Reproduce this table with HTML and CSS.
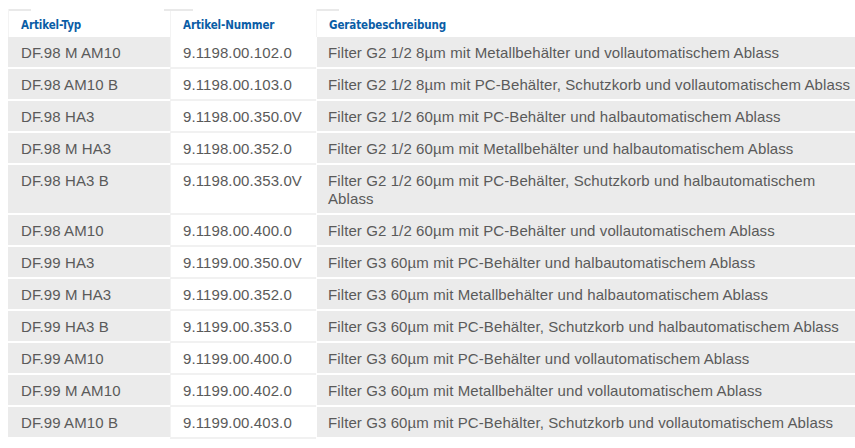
FILE: index.html
```html
<!DOCTYPE html>
<html lang="de">
<head>
<meta charset="utf-8">
<title>Filter</title>
<link rel="stylesheet" href="styles.css">
</head>
<body>
<table class="spec">
  <colgroup>
    <col class="c-typ">
    <col class="c-nr">
    <col class="c-desc">
  </colgroup>
  <thead>
    <tr>
      <th class="h-typ">Artikel-Typ</th>
      <th class="h-nr">Artikel-Nummer</th>
      <th class="h-desc">Gerätebeschreibung</th>
    </tr>
  </thead>
  <tbody>
    <tr><td>DF.98 M AM10</td><td class="nr">9.1198.00.102.0</td><td>Filter G2 1/2 8µm mit Metallbehälter und vollautomatischem Ablass</td></tr>
    <tr><td>DF.98 AM10 B</td><td class="nr">9.1198.00.103.0</td><td>Filter G2 1/2 8µm mit PC-Behälter, Schutzkorb und vollautomatischem Ablass</td></tr>
    <tr><td>DF.98 HA3</td><td class="nr">9.1198.00.350.0V</td><td>Filter G2 1/2 60µm mit PC-Behälter und halbautomatischem Ablass</td></tr>
    <tr><td>DF.98 M HA3</td><td class="nr">9.1198.00.352.0</td><td>Filter G2 1/2 60µm mit Metallbehälter und halbautomatischem Ablass</td></tr>
    <tr><td>DF.98 HA3 B</td><td class="nr">9.1198.00.353.0V</td><td>Filter G2 1/2 60µm mit PC-Behälter, Schutzkorb und halbautomatischem Ablass</td></tr>
    <tr><td>DF.98 AM10</td><td class="nr">9.1198.00.400.0</td><td>Filter G2 1/2 60µm mit PC-Behälter und vollautomatischem Ablass</td></tr>
    <tr><td>DF.99 HA3</td><td class="nr">9.1199.00.350.0V</td><td>Filter G3 60µm mit PC-Behälter und halbautomatischem Ablass</td></tr>
    <tr><td>DF.99 M HA3</td><td class="nr">9.1199.00.352.0</td><td>Filter G3 60µm mit Metallbehälter und halbautomatischem Ablass</td></tr>
    <tr><td>DF.99 HA3 B</td><td class="nr">9.1199.00.353.0</td><td>Filter G3 60µm mit PC-Behälter, Schutzkorb und halbautomatischem Ablass</td></tr>
    <tr><td>DF.99 AM10</td><td class="nr">9.1199.00.400.0</td><td>Filter G3 60µm mit PC-Behälter und vollautomatischem Ablass</td></tr>
    <tr><td>DF.99 M AM10</td><td class="nr">9.1199.00.402.0</td><td>Filter G3 60µm mit Metallbehälter und vollautomatischem Ablass</td></tr>
    <tr><td>DF.99 AM10 B</td><td class="nr">9.1199.00.403.0</td><td>Filter G3 60µm mit PC-Behälter, Schutzkorb und vollautomatischem Ablass</td></tr>
  </tbody>
</table>
</body>
</html>
```

FILE: styles.css
```css
html, body {
  margin: 0;
  padding: 0;
  background: #ffffff;
  overflow: hidden;
}

body {
  padding: 9px 0 0 8px;
  font-family: "Liberation Sans", Arial, sans-serif;
}

.spec {
  width: 847px;
  table-layout: fixed;
  border-collapse: separate;
  border-spacing: 0;
}

.c-typ { width: 162px; }
.c-nr { width: 146px; }
.c-desc { width: 539px; }

.spec th {
  position: relative;
  text-align: left;
  font-family: "DejaVu Sans Condensed", "DejaVu Sans", sans-serif;
  font-stretch: condensed;
  font-weight: bold;
  font-size: 11.5px;
  letter-spacing: -0.1px;
  line-height: 14px;
  color: #0a5da6;
  padding: 9px 12px 5px 12px;
  border-left: 1px solid #f3f3f3;
  background: #ffffff;
}

.spec th::before {
  content: "";
  position: absolute;
  top: 0;
  left: 0;
  width: 22px;
  height: 2px;
  background: #e9e9e9;
}

.spec th.h-nr::before {
  left: -7px;
  width: 29px;
}

.spec td {
  vertical-align: top;
  font-size: 15px;
  letter-spacing: 0.1px;
  line-height: 18px;
  color: #5a5a5a;
  background: #ebebeb;
  padding: 7px 0 5px 12px;
  border-bottom: 2px solid #ffffff;
}

.spec td:first-child {
  padding-left: 13px;
}

.spec td.nr {
  background: #ffffff;
  border-left: 1px solid #f3f3f3;
  border-bottom-color: #f1f1f1;
  padding-left: 12px;
}

.spec td:last-child {
  border-left: 1px solid #ffffff;
  padding-left: 11px;
}
```
